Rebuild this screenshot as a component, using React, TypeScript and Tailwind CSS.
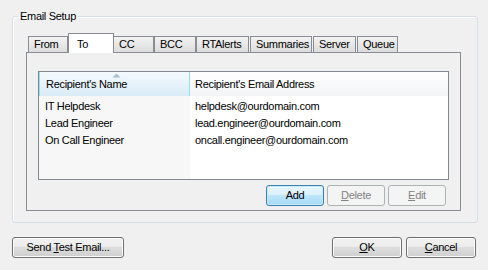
import React from 'react';

const font = { fontFamily: '"Liberation Sans", Arial, sans-serif' };

const tabs = [
  { label: 'From', cls: 'w-[40px]' },
  { label: 'To', cls: 'w-[46px]', active: true },
  { label: 'CC', cls: 'w-[41px] -ml-[1px]' },
  { label: 'BCC', cls: 'w-[42px]' },
  { label: 'RTAlerts', cls: 'w-[53px]' },
  { label: 'Summaries', cls: 'w-[62px] ml-[1px]' },
  { label: 'Server', cls: 'w-[43px] ml-[1px]' },
  { label: 'Queue', cls: 'w-[41px] ml-[1px]' },
];

const recipients = [
  { name: 'IT Helpdesk', email: 'helpdesk@ourdomain.com' },
  { name: 'Lead Engineer', email: 'lead.engineer@ourdomain.com' },
  { name: 'On Call Engineer', email: 'oncall.engineer@ourdomain.com' },
];

function Button({
  children,
  width,
  variant = 'normal',
}: {
  children: React.ReactNode;
  width: string;
  variant?: 'normal' | 'default' | 'disabled';
}) {
  const look =
    variant === 'default'
      ? 'border-[#3c7fb1] bg-[linear-gradient(to_bottom,#eaf6fd_0%,#d9f0fc_50%,#bee6fd_50%,#a7d9f5_100%)] shadow-[inset_0_0_0_1px_#c9ecfc] text-black'
      : variant === 'disabled'
        ? 'border-[#adb2b5] bg-[#f4f4f4] text-[#838383]'
        : 'border-[#707070] bg-[linear-gradient(to_bottom,#f2f2f2_0%,#ebebeb_50%,#dddddd_50%,#cfcfcf_100%)] shadow-[inset_0_0_0_1px_#fcfcfc] text-black';
  return (
    <div
      className={`${width} h-[21px] flex items-center justify-center rounded-[3px] border text-[11px] tracking-[-0.3px] ${look}`}
    >
      <span>{children}</span>
    </div>
  );
}

export default function App() {
  return (
    <div
      className="w-[488px] h-[270px] bg-[#f0f0f0] pl-[12px] pt-[9px] text-black overflow-hidden"
      style={font}
    >
      <fieldset className="w-[466px] h-[214px] border border-[#d5dfe5] rounded-[3px] shadow-[inset_1px_1px_0_#ffffff]">
        <legend className="ml-[5px] px-[2px] h-[15px] leading-[15px] text-[11px] tracking-[-0.3px]">
          Email Setup
        </legend>

        <div className="ml-[15px] mt-[9px] flex items-end h-[20px]">
          {tabs.map((t) =>
            t.active ? (
              <div
                key={t.label}
                className={`${t.cls} relative z-10 h-[20px] pt-[2px] pl-[8px] border border-b-0 border-[#898c95] bg-white text-[11px] leading-[16px] tracking-[-0.3px]`}
              >
                {t.label}
              </div>
            ) : (
              <div
                key={t.label}
                className={`${t.cls} h-[16px] mb-[1px] pl-[5px] border border-b-0 border-[#898c95] bg-gradient-to-b from-[#f3f3f3] to-[#dcdcdc] text-[11px] leading-[15px] tracking-[-0.3px]`}
              >
                {t.label}
              </div>
            ),
          )}
        </div>

        <div className="ml-[13px] -mt-[1px] w-[435px] h-[159px] border border-[#898c95] pt-[18px] pl-[11px]">
          <div className="w-[411px] h-[109px] border border-[#828790] bg-white flex">
            <div className="w-[151px] flex flex-col bg-[#f7f7f7]">
              <div className="relative h-[24px] border-x border-[#96d9f9] bg-gradient-to-b from-[#f4fafd] to-[#d9ecf7] pl-[6px] flex items-center text-[11px] tracking-[-0.3px]">
                <svg
                  className="absolute left-[72px] top-[1px]"
                  width="9"
                  height="5"
                  viewBox="0 0 9 5"
                >
                  <path d="M0.5 4.5 L4.5 0.5 L8.5 4.5 Z" fill="#a9bfcd" />
                </svg>
                Recipient's Name
              </div>
              <div className="pt-[2px] pl-[6px]">
                {recipients.map((r) => (
                  <div key={r.name} className="h-[17px] leading-[17px] text-[11px] tracking-[-0.3px]">
                    {r.name}
                  </div>
                ))}
              </div>
            </div>
            <div className="flex-1 flex flex-col">
              <div className="h-[24px] bg-gradient-to-b from-white to-[#f3f4f6] pl-[5px] flex items-center text-[11px] tracking-[-0.3px]">
                Recipient's Email Address
              </div>
              <div className="pt-[2px] pl-[5px]">
                {recipients.map((r) => (
                  <div key={r.email} className="h-[17px] leading-[17px] text-[11px] tracking-[-0.3px]">
                    {r.email}
                  </div>
                ))}
              </div>
            </div>
          </div>

          <div className="mt-[5px] w-[411px] pr-[3px] flex justify-end gap-[3px]">
            <Button width="w-[58px]" variant="default">
              Add
            </Button>
            <Button width="w-[58px]" variant="disabled">
              <span className="underline">D</span>elete
            </Button>
            <Button width="w-[58px]" variant="disabled">
              <span className="underline">E</span>dit
            </Button>
          </div>
        </div>
      </fieldset>

      <div className="w-[464px] mt-[14px] flex justify-between">
        <Button width="w-[112px]">
          Send <span className="underline">T</span>est Email...
        </Button>
        <div className="flex gap-[4px]">
          <Button width="w-[70px]">
            <span className="underline">O</span>K
          </Button>
          <Button width="w-[70px]">
            <span className="underline">C</span>ancel
          </Button>
        </div>
      </div>
    </div>
  );
}
